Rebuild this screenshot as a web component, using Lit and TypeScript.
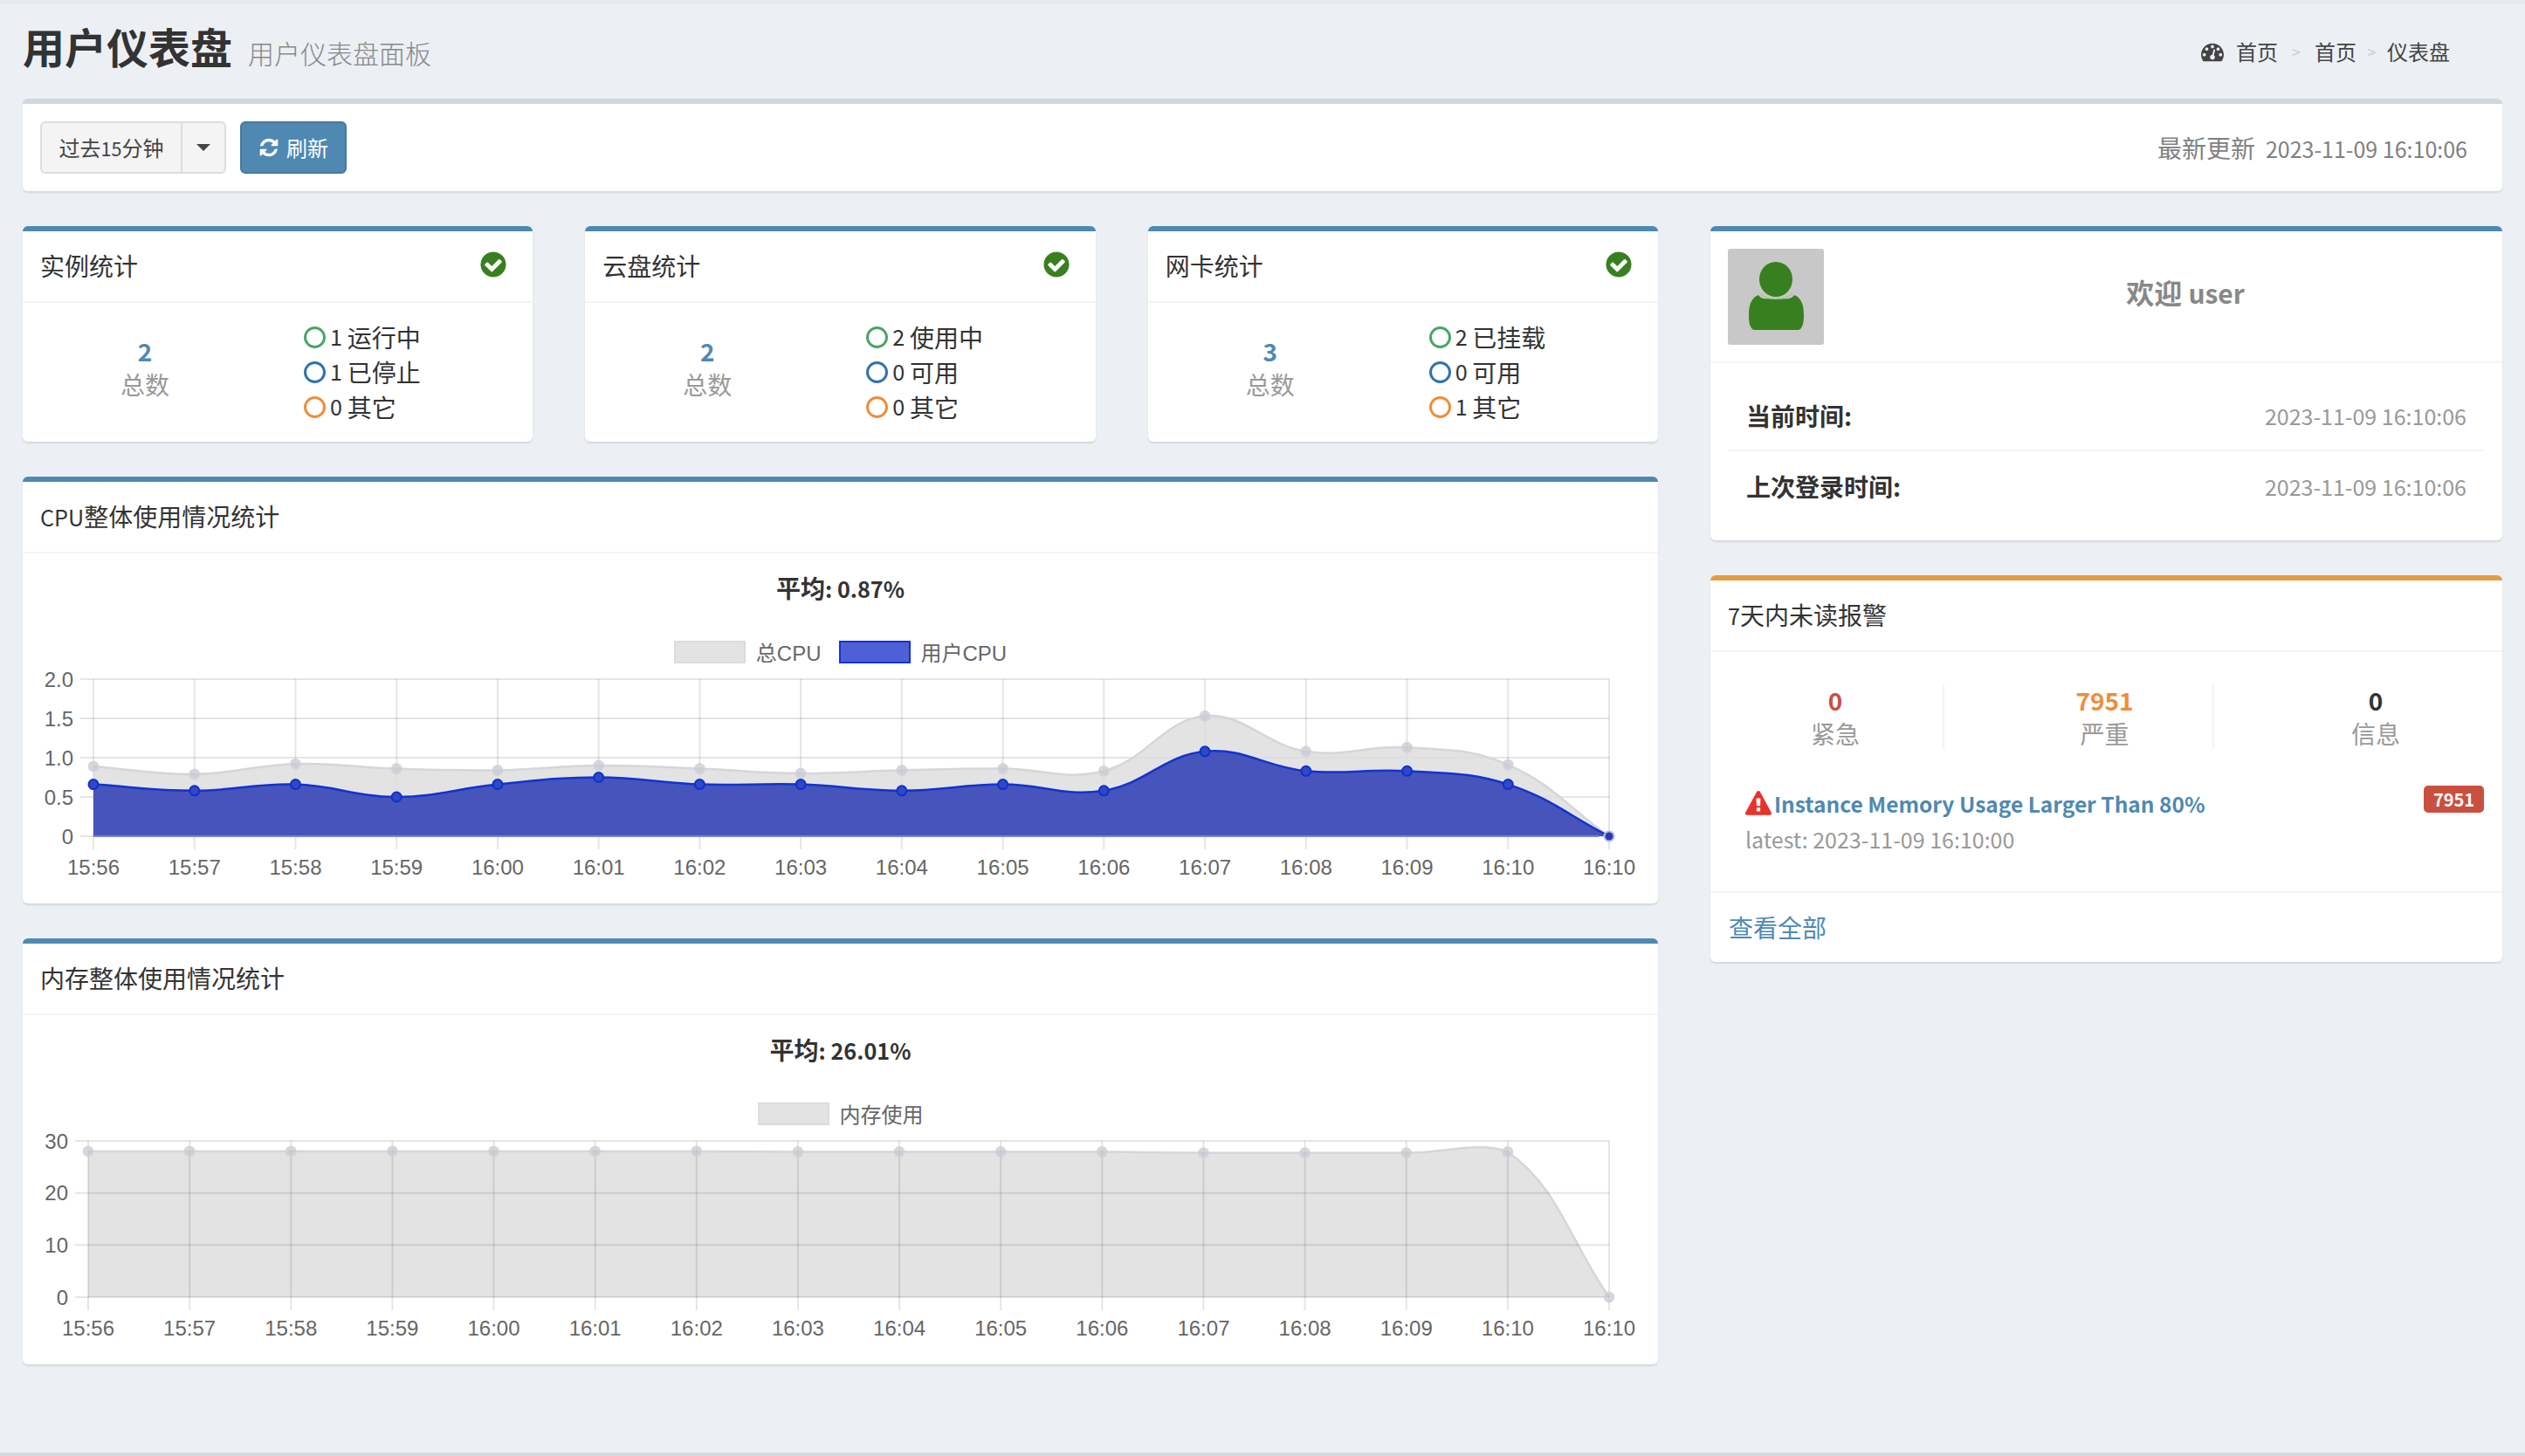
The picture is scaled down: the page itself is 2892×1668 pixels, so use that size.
import { LitElement, html, svg, css, unsafeCSS } from 'lit';
import { customElement, property } from 'lit/decorators.js';

const FONT = unsafeCSS(`"Noto Sans CJK SC", "Noto Sans", sans-serif`);
const TIMES = [
  '15:56', '15:57', '15:58', '15:59', '16:00', '16:01', '16:02', '16:03',
  '16:04', '16:05', '16:06', '16:07', '16:08', '16:09', '16:10', '16:10',
];

interface Series {
  name: string;
  values: number[];
  fill: string;
  stroke: string;
  swatch: string;
  swatchBorder: string;
  pointFill: string;
  pointStroke: string;
}

const GREY = {
  fill: 'rgba(220,220,220,.8)',
  stroke: '#d5d6da',
  swatch: '#e3e3e3',
  swatchBorder: '#dcdcdc',
  pointFill: 'rgba(198,201,210,.7)',
  pointStroke: 'rgba(208,210,218,.8)',
};
const BLUE = {
  fill: '#4654bc',
  stroke: '#1233cf',
  swatch: '#4f60d6',
  swatchBorder: '#1233d8',
  pointFill: '#3048c6',
  pointStroke: '#1030cc',
};

type Pt = { x: number; y: number };

// same curve chart.js draws with tension .4, so the overshoot lands in the same spots
function splinePath(pts: Pt[], minY: number, maxY: number): string {
  const clamp = (v: number) => Math.min(maxY, Math.max(minY, v));
  const ctrl = pts.map((p, i) => {
    const prev = pts[i - 1] ?? p;
    const next = pts[i + 1] ?? p;
    const d01 = Math.hypot(p.x - prev.x, p.y - prev.y);
    const d12 = Math.hypot(next.x - p.x, next.y - p.y);
    const sum = d01 + d12 || 1;
    const fa = (0.4 * d01) / sum;
    const fb = (0.4 * d12) / sum;
    return {
      px: p.x - fa * (next.x - prev.x),
      py: clamp(p.y - fa * (next.y - prev.y)),
      nx: p.x + fb * (next.x - prev.x),
      ny: clamp(p.y + fb * (next.y - prev.y)),
    };
  });
  let d = `M${pts[0].x} ${pts[0].y}`;
  for (let i = 1; i < pts.length; i++) {
    d += ` C${ctrl[i - 1].nx} ${ctrl[i - 1].ny} ${ctrl[i].px} ${ctrl[i].py} ${pts[i].x} ${pts[i].y}`;
  }
  return d;
}

@customElement('line-chart')
export class LineChart extends LitElement {
  @property({ type: Array }) series: Series[] = [];
  @property({ type: Array }) ticks: { label: string; value: number }[] = [];
  @property({ type: Number }) left = 80;
  @property({ type: Number }) top = 18;
  @property({ type: Number }) bottom = 198;
  @property({ type: Number }) max = 1;

  static styles = css`
    :host {
      display: block;
    }
    .legend {
      display: flex;
      justify-content: center;
      align-items: center;
      height: 27px;
      font: 24px "Liberation Sans", "Noto Sans CJK SC", sans-serif;
      color: #666;
    }
    .swatch {
      box-sizing: border-box;
      width: 82px;
      height: 26px;
      margin-right: 12px;
      border-width: 2px;
      border-style: solid;
    }
    .name {
      margin-right: 20px;
      white-space: nowrap;
    }
    .name:last-child {
      margin-right: 0;
    }
    svg {
      display: block;
    }
    text {
      font: 24px "Liberation Sans", sans-serif;
      fill: #666;
    }
  `;

  render() {
    const right = 1817;
    const bottom = this.bottom;
    const height = bottom + 77;
    const step = (right - this.left) / (TIMES.length - 1);
    const xAt = (i: number) => this.left + i * step;
    const yAt = (v: number) => bottom - (v / this.max) * (bottom - this.top);
    const stacked = this.series.length > 1;
    const lineColour = 'rgba(0,0,0,.1)';

    const grid = svg`
      ${this.ticks.map(
        (t) => svg`<line x1=${this.left - 15} x2=${right} y1=${yAt(t.value)} y2=${yAt(t.value)} stroke=${lineColour} stroke-width="2"></line>`
      )}
      ${TIMES.map(
        (_, i) => svg`<line x1=${xAt(i)} x2=${xAt(i)} y1=${this.top} y2=${bottom + 15} stroke=${lineColour} stroke-width="2"></line>`
      )}
    `;

    return html`
      <div class="legend">
        ${this.series.map(
          (s) => html`
            <span class="swatch" style="background:${s.swatch};border-color:${s.swatchBorder}"></span>
            <span class="name">${s.name}</span>
          `
        )}
      </div>
      <svg width="1873" height=${height} viewBox="0 0 1873 ${height}">
        ${stacked ? grid : ''}
        ${this.ticks.map(
          (t) => svg`<text x=${this.left - 23} y=${yAt(t.value)} text-anchor="end" dominant-baseline="central">${t.label}</text>`
        )}
        ${TIMES.map(
          (label, i) => svg`<text x=${xAt(i)} y=${bottom + 35} text-anchor="middle" dominant-baseline="central">${label}</text>`
        )}
        ${this.series.map((s) => {
          const pts = s.values.map((v, i) => ({ x: xAt(i), y: yAt(v) }));
          const line = splinePath(pts, this.top, bottom);
          return svg`
            <path d="${line} L${right} ${bottom} L${this.left} ${bottom} Z" fill=${s.fill}></path>
            <path d=${line} fill="none" stroke=${s.stroke} stroke-width="2.5"></path>
          `;
        })}
        ${stacked
          ? svg`<line x1=${this.left} x2=${right - 12} y1=${bottom} y2=${bottom} stroke="#7a85cc" stroke-width="2"></line>`
          : grid}
        ${this.series.map((s, n) =>
          s.values.map((v, i) => {
            // the last blue dot sits inside the grey one: small dark centre, pale ring
            if (n === 1 && i === s.values.length - 1) {
              return svg`
                <circle cx=${xAt(i)} cy=${yAt(v)} r="6.5" fill="#b4bbea"></circle>
                <circle cx=${xAt(i)} cy=${yAt(v)} r="4.5" fill="#2a3cb0"></circle>
              `;
            }
            return svg`<circle cx=${xAt(i)} cy=${yAt(v)} r="5.5" fill=${s.pointFill} stroke=${s.pointStroke} stroke-width="2"></circle>`;
          })
        )}
      </svg>
    `;
  }
}

@customElement('app-root')
export class AppRoot extends LitElement {
  static styles = css`
    :host {
      display: block;
      font-family: ${FONT};
    }
    * {
      box-sizing: border-box;
    }
    .page {
      height: 1668px;
      overflow: hidden;
      padding: 0 26px;
      background: #ecf0f5;
      border-top: 4px solid #e6e9ee;
      border-bottom: 4px solid #d6dae0;
      color: #333;
      font-size: 28px;
      line-height: 40px;
    }
    /* the original's latin face is narrower than the CJK font's own latin */
    .l {
      font-size: 0.9em;
      line-height: 1;
    }
    .head {
      display: flex;
      align-items: flex-start;
      justify-content: space-between;
      height: 109px;
    }
    h1 {
      margin: 18px 0 0;
      font-size: 48px;
      line-height: 60px;
      font-weight: 700;
      color: #333;
    }
    h1 small {
      margin-left: 18px;
      font-size: 30px;
      font-weight: 300;
      color: #888;
    }
    .crumbs {
      display: flex;
      align-items: center;
      margin: 38px 60px 0 0;
      height: 34px;
      font-size: 24px;
      color: #444;
    }
    .crumbs svg {
      width: 26px;
      height: 26px;
      margin-right: 14px;
      fill: #444;
    }
    .crumbs i {
      width: 42px;
      text-align: center;
      font-style: normal;
      font-size: 18px;
      color: #ccc;
    }
    .crumbs i.near {
      width: 35px;
    }
    .box {
      background: #fff;
      border-top: 6px solid #4f89b2;
      border-radius: 6px;
      box-shadow: 0 2px 2px rgba(0, 0, 0, 0.1);
    }
    .box.warn {
      border-top-color: #e39c42;
    }
    .toolbar {
      display: flex;
      align-items: center;
      justify-content: space-between;
      height: 106px;
      padding: 0 40px 0 20px;
      border-top-color: #d2d6de;
      margin-bottom: 40px;
    }
    .tools {
      display: flex;
      gap: 16px;
    }
    .split {
      display: flex;
      width: 213px;
      height: 60px;
      background: #f4f4f4;
      border: 2px solid #ddd;
      border-radius: 6px;
      font-size: 24px;
      color: #444;
    }
    .split span.txt {
      flex: 1;
      line-height: 56px;
      text-align: center;
      border-right: 2px solid #ddd;
    }
    .split b {
      width: 48px;
    }
    .caret {
      width: 0;
      height: 0;
      margin: 24px auto 0;
      border: 8px solid transparent;
      border-top-color: #444;
      border-bottom: 0;
    }
    .refresh {
      display: flex;
      align-items: center;
      justify-content: center;
      gap: 8px;
      width: 122px;
      height: 60px;
      background: #4f89b2;
      border: 2px solid #46799f;
      border-radius: 6px;
      color: #fff;
      font-size: 24px;
    }
    .refresh svg {
      width: 24px;
      height: 24px;
      fill: #fff;
    }
    .updated {
      color: #808080;
    }
    .updated em {
      margin-left: 12px;
      font-style: normal;
      font-size: 25px;
    }
    .main {
      display: grid;
      grid-template-columns: 1873px 907px;
      gap: 60px;
      align-items: start;
    }
    .left,
    .right {
      display: flex;
      flex-direction: column;
      gap: 40px;
    }
    .cards {
      display: grid;
      grid-template-columns: repeat(3, 1fr);
      gap: 60px;
    }
    .box-head {
      display: flex;
      align-items: center;
      justify-content: space-between;
      height: 82px;
      padding: 0 20px 3px;
      border-bottom: 2px solid #f4f4f4;
    }
    .box-head svg {
      width: 34px;
      height: 34px;
      margin: -2px 8px 0 0;
      fill: #38801f;
    }
    .card-body {
      display: grid;
      grid-template-columns: 280px 1fr;
      height: 159px;
      padding-top: 19px;
    }
    .total {
      margin-top: 18px;
      text-align: center;
      line-height: 37px;
    }
    .num {
      display: block;
      font-weight: 700;
    }
    .num.blue {
      color: #4f89b2;
    }
    .num.red {
      color: #c9503f;
    }
    .num.orange {
      color: #ee8d3a;
    }
    .sub {
      display: block;
      margin-top: 1px;
      color: #999;
    }
    .list {
      padding-left: 42px;
    }
    .list div {
      display: flex;
      align-items: center;
      height: 40px;
      white-space: pre;
    }
    .ring {
      width: 25px;
      height: 25px;
      margin-right: 5px;
      border: 3.5px solid;
      border-radius: 50%;
    }
    .avg {
      padding-top: 19px;
      margin-bottom: 40px;
      text-align: center;
      font-weight: 700;
    }
    .who {
      display: flex;
      height: 151px;
      padding: 20px;
      border-bottom: 2px solid #f4f4f4;
    }
    .avatar {
      flex: none;
      width: 110px;
      height: 110px;
      background: #c8c8c8;
      border-radius: 3px;
    }
    .hello {
      flex: 1;
      margin-left: 71px;
      text-align: center;
      line-height: 98px;
      font-size: 32px;
      font-weight: 700;
      color: #888;
    }
    .hello span {
      font-size: 30px;
    }
    .rows {
      height: 203px;
      padding: 21px 20px 0;
    }
    .row {
      display: flex;
      align-items: center;
      justify-content: space-between;
      height: 78px;
      padding: 0 21px;
      font-weight: 700;
    }
    .row + .row {
      height: 82px;
      border-top: 2px solid #f4f4f4;
    }
    .row span {
      font-size: 25px;
      font-weight: 400;
      color: #999;
    }
    .stats {
      display: grid;
      grid-template-columns: 248px 309px 1fr;
      margin: 37px 20px 0;
      text-align: center;
      line-height: 37px;
    }
    .stats div {
      padding-left: 60px;
      border-right: 2px solid #f4f4f4;
    }
    .stats div:first-child {
      padding-left: 0;
    }
    .stats div:last-child {
      border-right: 0;
    }
    .alert {
      display: flex;
      justify-content: space-between;
      align-items: flex-start;
      height: 164px;
      padding: 42px 21px 0 40px;
      border-bottom: 2px solid #f4f4f4;
    }
    .alert a {
      display: flex;
      align-items: center;
      gap: 3px;
      font-size: 24.5px;
      font-weight: 700;
      color: #4f89b2;
    }
    .alert svg {
      width: 30px;
      height: 30px;
      fill: #e8322a;
    }
    .alert p {
      margin: 0;
      font-size: 25px;
      color: #999;
    }
    .badge {
      width: 69px;
      height: 31px;
      margin-top: -1px;
      background: #c9503f;
      border-radius: 5px;
      color: #fff;
      font-size: 20px;
      font-weight: 700;
      line-height: 31px;
      text-align: center;
    }
    .foot {
      height: 79px;
      padding: 0 21px;
      line-height: 78px;
      color: #4f89b2;
    }
  `;

  private statCard(title: string, total: number, rows: [number, string][]) {
    const colours = ['#4aa564', '#2f72b0', '#ee8d3a'];
    return html`
      <div class="box">
        <div class="box-head">
          ${title}
          <svg viewBox="0 0 1792 1792"><path d="M1412 734q0-28-18-46l-91-90q-19-19-45-19t-45 19l-408 407-226-226q-19-19-45-19t-45 19l-91 90q-18 18-18 46 0 27 18 45l362 362q19 19 45 19 27 0 46-19l543-543q18-18 18-45zm252 162q0 209-103 385.5t-279.5 279.5-385.5 103-385.5-103-279.5-279.5-103-385.5 103-385.5 279.5-279.5 385.5-103 385.5 103 279.5 279.5 103 385.5z"></path></svg>
        </div>
        <div class="card-body">
          <div class="total">
            <span class="num blue">${total}</span>
            <span class="sub">总数</span>
          </div>
          <div class="list">
            ${rows.map(
              ([n, label], i) => html`<div><span class="ring" style="border-color:${colours[i]}"></span><span class="l">${n} </span>${label}</div>`
            )}
          </div>
        </div>
      </div>
    `;
  }

  render() {
    return html`
      <div class="page">
        <div class="head">
          <h1>用户仪表盘<small>用户仪表盘面板</small></h1>
          <div class="crumbs">
            <svg viewBox="0 0 1792 1792"><path d="M384 1152q0-53-37.5-90.5t-90.5-37.5-90.5 37.5-37.5 90.5 37.5 90.5 90.5 37.5 90.5-37.5 37.5-90.5zm192-448q0-53-37.5-90.5t-90.5-37.5-90.5 37.5-37.5 90.5 37.5 90.5 90.5 37.5 90.5-37.5 37.5-90.5zm428 481l101-382q6-26-7.5-48.5t-38.5-29.5-48 6.5-30 39.5l-101 382q-60 5-107 43.5t-63 98.5q-20 77 20 146t117 89 146-20 89-117q16-60-6-117t-72-91zm660-33q0-53-37.5-90.5t-90.5-37.5-90.5 37.5-37.5 90.5 37.5 90.5 90.5 37.5 90.5-37.5 37.5-90.5zm-640-640q0-53-37.5-90.5t-90.5-37.5-90.5 37.5-37.5 90.5 37.5 90.5 90.5 37.5 90.5-37.5 37.5-90.5zm448 192q0-53-37.5-90.5t-90.5-37.5-90.5 37.5-37.5 90.5 37.5 90.5 90.5 37.5 90.5-37.5 37.5-90.5zm320 448q0 261-141 483-19 29-54 29h-1402q-35 0-54-29-141-221-141-483 0-182 71-348t191-286 286-191 348-71 348 71 286 191 191 286 71 348z"></path></svg>
            首页<i>&gt;</i>首页<i class="near">&gt;</i>仪表盘
          </div>
        </div>

        <div class="box toolbar">
          <div class="tools">
            <div class="split"><span class="txt">过去<span class="l">15</span>分钟</span><b><div class="caret"></div></b></div>
            <div class="refresh">
              <svg viewBox="0 0 1792 1792"><path d="M1639 1056q0 5-1 7-64 268-268 434.5t-478 166.5q-146 0-282.5-55t-243.5-157l-129 129q-19 19-45 19t-45-19-19-45v-448q0-26 19-45t45-19h448q26 0 45 19t19 45-19 45l-137 137q71 66 161 102t187 36q134 0 250-65t186-179q11-17 53-117 8-23 30-23h192q13 0 22.5 9.5t9.5 22.5zm25-800v448q0 26-19 45t-45 19h-448q-26 0-45-19t-19-45 19-45l138-138q-148-137-349-137-134 0-250 65t-186 179q-11 17-53 117-8 23-30 23h-199q-13 0-22.5-9.5t-9.5-22.5v-7q65-268 270-434.5t480-166.5q146 0 284 55.5t245 156.5l130-129q19-19 45-19t45 19 19 45z"></path></svg>
              刷新
            </div>
          </div>
          <div class="updated">最新更新<em>2023-11-09 16:10:06</em></div>
        </div>

        <div class="main">
          <div class="left">
            <div class="cards">
              ${this.statCard('实例统计', 2, [[1, '运行中'], [1, '已停止'], [0, '其它']])}
              ${this.statCard('云盘统计', 2, [[2, '使用中'], [0, '可用'], [0, '其它']])}
              ${this.statCard('网卡统计', 3, [[2, '已挂载'], [0, '可用'], [1, '其它']])}
            </div>
            <div class="box">
              <div class="box-head"><span><span class="l">CPU</span>整体使用情况统计</span></div>
              <div class="avg">平均<span class="l">: 0.87%</span></div>
              <line-chart
                .left=${81}
                .top=${18}
                .bottom=${198}
                .max=${2}
                .ticks=${[
                  { label: '2.0', value: 2 },
                  { label: '1.5', value: 1.5 },
                  { label: '1.0', value: 1 },
                  { label: '0.5', value: 0.5 },
                  { label: '0', value: 0 },
                ]}
                .series=${[
                  { name: '总CPU', ...GREY, values: [0.89, 0.79, 0.92, 0.86, 0.84, 0.9, 0.86, 0.8, 0.84, 0.86, 0.83, 1.53, 1.08, 1.13, 0.91, 0] },
                  { name: '用户CPU', ...BLUE, values: [0.66, 0.58, 0.66, 0.5, 0.66, 0.75, 0.66, 0.66, 0.58, 0.66, 0.58, 1.08, 0.83, 0.83, 0.66, 0] },
                ]}
              ></line-chart>
            </div>
            <div class="box">
              <div class="box-head">内存整体使用情况统计</div>
              <div class="avg">平均<span class="l">: 26.01%</span></div>
              <line-chart
                .left=${75}
                .top=${18}
                .bottom=${197}
                .max=${30}
                .ticks=${[
                  { label: '30', value: 30 },
                  { label: '20', value: 20 },
                  { label: '10', value: 10 },
                  { label: '0', value: 0 },
                ]}
                .series=${[
                  { name: '内存使用', ...GREY, values: [28, 28, 28, 28, 28, 28, 28, 27.9, 27.9, 27.9, 27.9, 27.7, 27.7, 27.7, 27.9, 0] },
                ]}
              ></line-chart>
            </div>
          </div>

          <div class="right">
            <div class="box">
              <div class="who">
                <svg class="avatar" viewBox="0 0 110 110">
                  <path d="M35 53C27 56 24 64 24 76C24 84 25 89 28 92C29 93 31 93 33 93H78C80 93 82 93 83 92C86 89 87 84 87 76C87 64 84 56 76 53C72 59 64 57 55 57C46 57 39 59 35 53Z" fill="#38801f"></path>
                  <path d="M37 51C42 59 68 59 74 51" fill="none" stroke="#a9c99c" stroke-width="2"></path>
                  <ellipse cx="55" cy="35" rx="19" ry="20" fill="#38801f"></ellipse>
                </svg>
                <div class="hello">欢迎 <span>user</span></div>
              </div>
              <div class="rows">
                <div class="row">当前时间:<span>2023-11-09 16:10:06</span></div>
                <div class="row">上次登录时间:<span>2023-11-09 16:10:06</span></div>
              </div>
            </div>

            <div class="box warn">
              <div class="box-head"><span><span class="l">7</span>天内未读报警</span></div>
              <div class="stats">
                <div><span class="num red">0</span><span class="sub">紧急</span></div>
                <div><span class="num orange">7951</span><span class="sub">严重</span></div>
                <div><span class="num">0</span><span class="sub">信息</span></div>
              </div>
              <div class="alert">
                <div>
                  <a>
                    <svg viewBox="0 0 1792 1792"><path d="M1024 1375v-190q0-14-9.5-23.5t-22.5-9.5h-192q-13 0-22.5 9.5t-9.5 23.5v190q0 14 9.5 23.5t22.5 9.5h192q13 0 22.5-9.5t9.5-23.5zm-2-374l18-459q0-12-10-19-13-11-24-11h-220q-11 0-24 11-10 7-10 21l17 457q0 10 10 16.5t24 6.5h185q14 0 23.5-6.5t10.5-16.5zm-14-934l768 1408q35 63-2 126-17 29-46.5 46t-63.5 17h-1536q-34 0-63.5-17t-46.5-46q-37-63-2-126l768-1408q17-31 47-49t65-18 65 18 47 49z"></path></svg>
                    Instance Memory Usage Larger Than 80%
                  </a>
                  <p>latest: 2023-11-09 16:10:00</p>
                </div>
                <span class="badge">7951</span>
              </div>
              <div class="foot">查看全部</div>
            </div>
          </div>
        </div>
      </div>
    `;
  }
}
